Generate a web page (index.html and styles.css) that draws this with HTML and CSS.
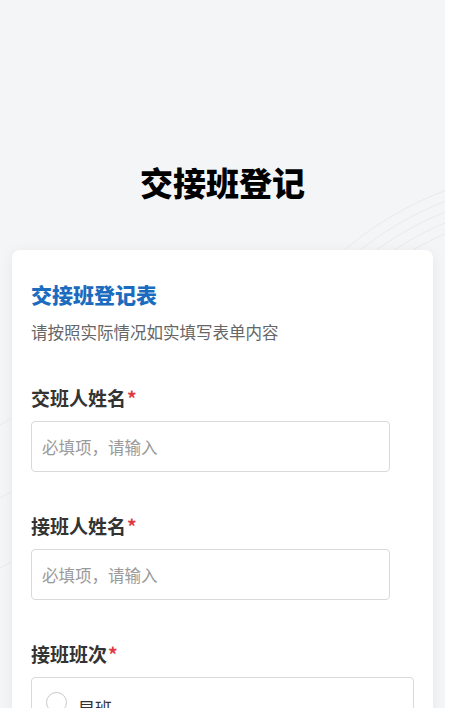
FILE: index.html
```html
<!DOCTYPE html>
<html lang="zh-CN">
<head>
<meta charset="utf-8">
<title>交接班登记</title>
<link rel="stylesheet" href="styles.css">
</head>
<body>
<div class="page">
  <svg class="deco" width="445" height="708" viewBox="0 0 445 708" aria-hidden="true">
    <g fill="none" stroke="#e8eaed" stroke-width="1">
      <circle cx="560" cy="500" r="290"/>
      <circle cx="560" cy="500" r="300"/>
      <circle cx="560" cy="500" r="310"/>
      <circle cx="560" cy="500" r="320"/>
      <circle cx="560" cy="500" r="330"/>
      <path d="M0 425 Q 20 412 40 405"/>
      <path d="M0 498 Q 20 486 40 478"/>
      <path d="M0 568 Q 20 556 40 548"/>
    </g>
  </svg>
  <header class="hero">
    <h1 class="hero-title">交接班登记</h1>
  </header>
  <main class="card">
    <h2 class="card-title">交接班登记表</h2>
    <p class="card-desc">请按照实际情况如实填写表单内容</p>

    <div class="field">
      <label class="field-label">交班人姓名<span class="req">*</span></label>
      <input class="text-input" type="text" placeholder="必填项，请输入">
    </div>

    <div class="field">
      <label class="field-label">接班人姓名<span class="req">*</span></label>
      <input class="text-input" type="text" placeholder="必填项，请输入">
    </div>

    <div class="field">
      <label class="field-label">接班班次<span class="req">*</span></label>
      <div class="radio-group">
        <label class="radio-item"><span class="radio-circle"></span><span class="radio-text">早班</span></label>
      </div>
    </div>
  </main>
</div>
</body>
</html>
```

FILE: styles.css
```css
* {
  box-sizing: border-box;
}

html, body {
  margin: 0;
  padding: 0;
  background: #ffffff;
}

body {
  font-family: "Noto Sans CJK SC", "Noto Sans", "Liberation Sans", sans-serif;
  color: #333333;
}

.page {
  position: relative;
  width: 445px;
  height: 708px;
  background: #f4f5f7;
  overflow: hidden;
}

.deco {
  position: absolute;
  left: 0;
  top: 0;
  z-index: 0;
}

.hero {
  position: relative;
  z-index: 1;
  height: 250px;
  padding-top: 162px;
}

.hero-title {
  margin: 0;
  text-align: center;
  font-size: 33px;
  line-height: 40px;
  font-weight: 900;
  color: #000000;
}

.card {
  position: relative;
  z-index: 1;
  margin: 0 12px;
  background: #ffffff;
  border-radius: 8px;
  padding: 30px 19px 30px;
  box-shadow: 0 2px 14px rgba(0, 0, 0, 0.06);
}

.card-title {
  margin: 0;
  font-size: 21px;
  line-height: 28px;
  font-weight: 900;
  color: #1b6cbf;
}

.card-desc {
  margin: 12px 0 0;
  font-size: 16.5px;
  line-height: 24px;
  color: #666666;
}

.field {
  margin-top: 41px;
}

.field-label {
  display: block;
  font-size: 19px;
  line-height: 26px;
  font-weight: 700;
  color: #333333;
}

.req {
  color: #e0393e;
  margin-left: 1px;
}

.text-input {
  display: block;
  width: 359px;
  height: 51px;
  margin-top: 10px;
  padding: 0 10px;
  border: 1px solid #d9d9d9;
  border-radius: 4px;
  background: #ffffff;
  font-family: inherit;
  font-size: 16.5px;
  color: #333333;
  outline: none;
}

.text-input::placeholder {
  color: #9a9a9a;
}

.radio-group {
  margin-top: 10px;
  border: 1px solid #d9d9d9;
  border-radius: 4px;
  padding: 14px 14px 14px;
}

.radio-item {
  display: flex;
  align-items: center;
  gap: 11px;
  height: 21px;
}

.radio-circle {
  width: 21px;
  height: 21px;
  border: 1px solid #c8c8c8;
  border-radius: 50%;
  background: #ffffff;
  flex: none;
}

.radio-text {
  font-size: 17px;
  line-height: 24px;
  color: #333333;
  position: relative;
  top: 5px;
}
```
